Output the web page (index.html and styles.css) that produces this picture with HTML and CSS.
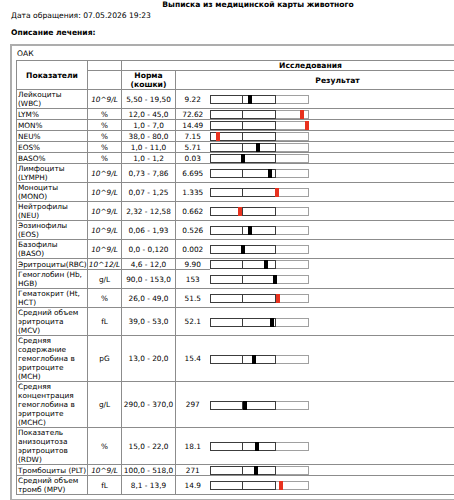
FILE: index.html
```html
<!DOCTYPE html>
<html lang="ru">
<head>
<meta charset="utf-8">
<title>Выписка из медицинской карты животного</title>
<link rel="stylesheet" href="styles.css">
</head>
<body>
<div class="page">
  <div class="doc-title">Выписка из медицинской карты животного</div>
  <div class="visit-date">Дата обращения: 07.05.2026 19:23</div>
  <div class="section-title">Описание лечения:</div>
  <div class="panel">
    <div class="panel-name">ОАК</div>
    <table class="results">
      <colgroup>
        <col class="c-name"><col class="c-unit"><col class="c-norm"><col class="c-val"><col class="c-bar">
      </colgroup>
      <thead>
        <tr>
          <th rowspan="2" class="h-name">Показатели</th>
          <th class="h-empty"></th>
          <th colspan="3">Исследования</th>
        </tr>
        <tr class="h-row2">
          <th class="h-empty"></th>
          <th>Норма<br>(кошки)</th>
          <th colspan="2">Результат</th>
        </tr>
      </thead>
      <tbody>
        <tr><td class="name">Лейкоциты<br>(WBC)</td><td class="unit it">10^9/L</td><td class="norm">5,50 - 19,50</td><td class="val">9.22</td><td class="bar-cell"><div class="bar"><span class="s1"></span><span class="s2"></span><span class="s3"></span><i class="mark" style="left:38px"></i></div></td></tr>
        <tr><td class="name">LYM%</td><td class="unit">%</td><td class="norm">12,0 - 45,0</td><td class="val">72.62</td><td class="bar-cell"><div class="bar"><span class="s1"></span><span class="s2"></span><span class="s3"></span><i class="mark hi" style="left:90px"></i></div></td></tr>
        <tr><td class="name">MON%</td><td class="unit">%</td><td class="norm">1,0 - 7,0</td><td class="val">14.49</td><td class="bar-cell"><div class="bar"><span class="s1"></span><span class="s2"></span><span class="s3"></span><i class="mark hi" style="left:95px"></i></div></td></tr>
        <tr><td class="name">NEU%</td><td class="unit">%</td><td class="norm">38,0 - 80,0</td><td class="val">7.15</td><td class="bar-cell"><div class="bar"><span class="s1"></span><span class="s2"></span><span class="s3"></span><i class="mark hi" style="left:6px"></i></div></td></tr>
        <tr><td class="name">EOS%</td><td class="unit">%</td><td class="norm">1,0 - 11,0</td><td class="val">5.71</td><td class="bar-cell"><div class="bar"><span class="s1"></span><span class="s2"></span><span class="s3"></span><i class="mark" style="left:46px"></i></div></td></tr>
        <tr><td class="name">BASO%</td><td class="unit">%</td><td class="norm">1,0 - 1,2</td><td class="val">0.03</td><td class="bar-cell"><div class="bar"><span class="s1"></span><span class="s2"></span><span class="s3"></span><i class="mark" style="left:31px"></i></div></td></tr>
        <tr><td class="name">Лимфоциты<br>(LYMPH)</td><td class="unit it">10^9/L</td><td class="norm">0,73 - 7,86</td><td class="val">6.695</td><td class="bar-cell"><div class="bar"><span class="s1"></span><span class="s2"></span><span class="s3"></span><i class="mark" style="left:58px"></i></div></td></tr>
        <tr><td class="name">Моноциты<br>(MONO)</td><td class="unit it">10^9/L</td><td class="norm">0,07 - 1,25</td><td class="val">1.335</td><td class="bar-cell"><div class="bar"><span class="s1"></span><span class="s2"></span><span class="s3"></span><i class="mark hi" style="left:65px"></i></div></td></tr>
        <tr><td class="name">Нейтрофилы<br>(NEU)</td><td class="unit it">10^9/L</td><td class="norm">2,32 - 12,58</td><td class="val">0.662</td><td class="bar-cell"><div class="bar"><span class="s1"></span><span class="s2"></span><span class="s3"></span><i class="mark hi" style="left:28px"></i></div></td></tr>
        <tr><td class="name">Эозинофилы<br>(EOS)</td><td class="unit it">10^9/L</td><td class="norm">0,06 - 1,93</td><td class="val">0.526</td><td class="bar-cell"><div class="bar"><span class="s1"></span><span class="s2"></span><span class="s3"></span><i class="mark" style="left:38px"></i></div></td></tr>
        <tr><td class="name">Базофилы<br>(BASO)</td><td class="unit it">10^9/L</td><td class="norm">0,0 - 0,120</td><td class="val">0.002</td><td class="bar-cell"><div class="bar"><span class="s1"></span><span class="s2"></span><span class="s3"></span><i class="mark" style="left:31px"></i></div></td></tr>
        <tr><td class="name">Эритроциты(RBC)</td><td class="unit it">10^12/L</td><td class="norm">4,6 - 12,0</td><td class="val">9.90</td><td class="bar-cell open"><div class="bar"><span class="s1"></span><span class="s2"></span><span class="s3"></span><i class="mark" style="left:54px"></i></div></td></tr>
        <tr><td class="name">Гемоглобин (Hb,<br>HGB)</td><td class="unit">g/L</td><td class="norm">90,0 - 153,0</td><td class="val">153</td><td class="bar-cell"><div class="bar"><span class="s1"></span><span class="s2"></span><span class="s3"></span><i class="mark" style="left:63px"></i></div></td></tr>
        <tr><td class="name">Гематокрит (Ht,<br>HCT)</td><td class="unit">%</td><td class="norm">26,0 - 49,0</td><td class="val">51.5</td><td class="bar-cell"><div class="bar"><span class="s1"></span><span class="s2"></span><span class="s3"></span><i class="mark hi" style="left:66px"></i></div></td></tr>
        <tr><td class="name">Средний объем<br>эритроцита<br>(MCV)</td><td class="unit">fL</td><td class="norm">39,0 - 53,0</td><td class="val">52.1</td><td class="bar-cell"><div class="bar"><span class="s1"></span><span class="s2"></span><span class="s3"></span><i class="mark" style="left:60px"></i></div></td></tr>
        <tr><td class="name">Средняя<br>содержание<br>гемоглобина в<br>эритроците<br>(MCH)</td><td class="unit">pG</td><td class="norm">13,0 - 20,0</td><td class="val">15.4</td><td class="bar-cell"><div class="bar"><span class="s1"></span><span class="s2"></span><span class="s3"></span><i class="mark" style="left:42px"></i></div></td></tr>
        <tr><td class="name">Средняя<br>концентрация<br>гемоглобина в<br>эритроците<br>(MCHC)</td><td class="unit">g/L</td><td class="norm">290,0 - 370,0</td><td class="val">297</td><td class="bar-cell"><div class="bar"><span class="s1"></span><span class="s2"></span><span class="s3"></span><i class="mark" style="left:33px"></i></div></td></tr>
        <tr><td class="name">Показатель<br>анизоцитоза<br>эритроцитов<br>(RDW)</td><td class="unit">%</td><td class="norm">15,0 - 22,0</td><td class="val">18.1</td><td class="bar-cell"><div class="bar"><span class="s1"></span><span class="s2"></span><span class="s3"></span><i class="mark" style="left:45px"></i></div></td></tr>
        <tr><td class="name">Тромбоциты (PLT)</td><td class="unit it">10^9/L</td><td class="norm">100,0 - 518,0</td><td class="val">271</td><td class="bar-cell"><div class="bar"><span class="s1"></span><span class="s2"></span><span class="s3"></span><i class="mark" style="left:44px"></i></div></td></tr>
        <tr><td class="name">Средний объем<br>тромб (MPV)</td><td class="unit">fL</td><td class="norm">8,1 - 13,9</td><td class="val">14.9</td><td class="bar-cell"><div class="bar"><span class="s1"></span><span class="s2"></span><span class="s3"></span><i class="mark hi" style="left:69px"></i></div></td></tr>
      </tbody>
    </table>
  </div>
</div>
</body>
</html>
```
FILE: styles.css
```css
html {
  overflow: hidden;
  background: #fff;
}
body {
  margin: 0;
  font-family: "DejaVu Sans", Verdana, sans-serif;
  font-size: 7.6px;
  line-height: 9px;
  color: #000;
}
.page {
  width: 496px;
  padding: 0 0 0 10px;
}
.doc-title {
  font-weight: bold;
  text-align: center;
  line-height: 10px;
}
.visit-date {
  padding-left: 1px;
  line-height: 9px;
  margin-top: 1px;
}
.section-title {
  font-weight: bold;
  padding-left: 1px;
  margin-top: 8px;
}
.panel {
  margin-top: 7px;
  width: 491px;
  border: 2px solid #adadad;
  border-right: 0;
  padding: 2px 0 4px 4px;
}
.panel-name {
  padding-left: 1px;
  line-height: 12px;
}
.results {
  border-collapse: collapse;
  table-layout: fixed;
  width: 484px;
  font-size: 7.35px;
}
.c-name { width: 71px; }
.c-unit { width: 34px; }
.c-norm { width: 54px; }
.c-val { width: 34px; }
.results th,
.results td {
  border: 1px solid #8c8c8c;
  padding: 0 1px;
  vertical-align: middle;
  white-space: nowrap;
}
.results th {
  font-weight: bold;
  font-size: 7.6px;
  text-align: center;
  height: 9px;
}
.results td.name {
  text-align: left;
  padding-left: 1px;
  padding-right: 0;
}
.unit, .norm, .val {
  text-align: center;
}
.results td.unit {
  padding: 0;
}
.unit.it {
  font-style: italic;
}
.results td.val {
  border-right: 0;
}
.results td.bar-cell {
  border-left: 0;
  padding: 1px 0 0;
}
.results td.bar-cell.open {
  border-bottom-color: transparent;
}
.bar {
  position: relative;
  display: flex;
  width: 99px;
  height: 9px;
}
.bar span {
  flex: 1 1 0;
  box-sizing: border-box;
  background: #fff;
}
.bar .s1 {
  border: 1px solid #3c3c3c;
}
.bar .s2 {
  border: 1px solid #3c3c3c;
  border-left: 0;
}
.bar .s3 {
  border: 1px solid #a0a0a0;
  border-left: 0;
}
.mark {
  position: absolute;
  top: 0;
  bottom: 0;
  width: 4px;
  background: #000;
}
.mark.hi {
  background: #e8321f;
}
```
